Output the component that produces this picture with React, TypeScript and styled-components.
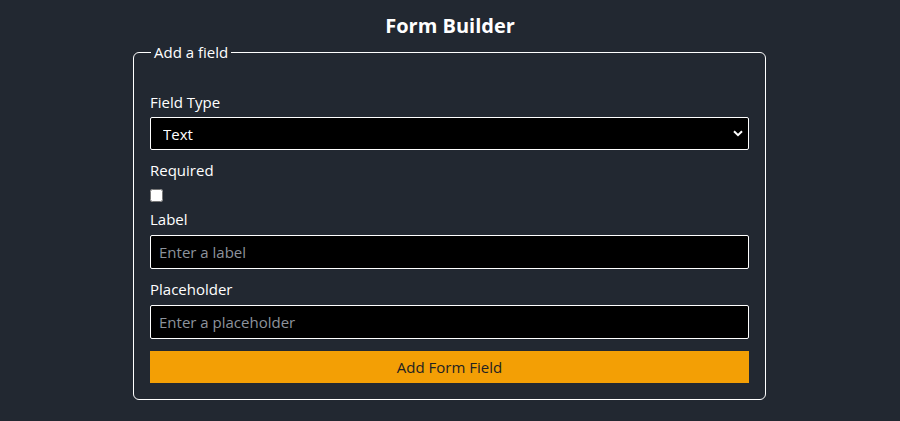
import React, { useState } from 'react';
import styled, { createGlobalStyle } from 'styled-components';

const GlobalStyle = createGlobalStyle`
  body {
    margin: 0;
    background-color: #222831;
    color: #ffffff;
    font-family: "Open Sans", "Noto Sans", sans-serif;
  }
  * {
    box-sizing: border-box;
  }
`;

const App: React.FC = () => {
  const [fieldType, setFieldType] = useState('text');
  const [required, setRequired] = useState(false);
  const [label, setLabel] = useState('');
  const [placeholder, setPlaceholder] = useState('');

  return (
    <>
      <GlobalStyle />
      <Page>
        <Title>Form Builder</Title>
        <Fieldset>
          <Legend>Add a field</Legend>
          <FieldLabel $top={29}>Field Type</FieldLabel>
          <SelectWrap>
            <Select value={fieldType} onChange={(e) => setFieldType(e.target.value)}>
              <option value="text">Text</option>
              <option value="number">Number</option>
              <option value="email">Email</option>
            </Select>
            <Chevron width="10" height="7" viewBox="0 0 10 7">
              <path d="M1 1.2 L5 5.2 L9 1.2" fill="none" stroke="#ffffff" strokeWidth="2" />
            </Chevron>
          </SelectWrap>
          <FieldLabel $top={9}>Required</FieldLabel>
          <Checkbox type="checkbox" checked={required} onChange={(e) => setRequired(e.target.checked)} />
          <FieldLabel $top={6}>Label</FieldLabel>
          <TextInput placeholder="Enter a label" value={label} onChange={(e) => setLabel(e.target.value)} />
          <FieldLabel $top={9}>Placeholder</FieldLabel>
          <TextInput
            placeholder="Enter a placeholder"
            value={placeholder}
            onChange={(e) => setPlaceholder(e.target.value)}
          />
          <AddButton type="button">Add Form Field</AddButton>
        </Fieldset>
      </Page>
    </>
  );
};

const Page = styled.div`
  display: flex;
  flex-direction: column;
  align-items: center;
  padding-top: 11px;
`;

const Title = styled.h1`
  margin: 0 0 1px;
  font-size: 20px;
  line-height: 30px;
  font-weight: 700;
  color: #ffffff;
`;

const Fieldset = styled.fieldset`
  display: flex;
  flex-direction: column;
  align-items: flex-start;
  width: 633px;
  margin: 0 0 0 -1px;
  padding: 0 16px 16px;
  border: 1px solid #ffffff;
  border-radius: 6px;
`;

const Legend = styled.legend`
  margin-left: 1px;
  padding: 0 3px;
  font-size: 15px;
  line-height: 20px;
`;

const FieldLabel = styled.label<{ $top: number }>`
  margin-top: ${(p) => p.$top}px;
  font-size: 15px;
  line-height: 22px;
`;

const SelectWrap = styled.div`
  position: relative;
  width: 100%;
  margin-top: 4px;
`;

const Select = styled.select`
  appearance: none;
  width: 100%;
  height: 33px;
  padding: 0 12px;
  background-color: #000000;
  color: #ffffff;
  border: 1px solid #ffffff;
  border-radius: 2px;
  font-family: inherit;
  font-size: 15px;
`;

const Chevron = styled.svg`
  position: absolute;
  right: 6px;
  top: 13px;
  pointer-events: none;
`;

const Checkbox = styled.input`
  width: 13px;
  height: 13px;
  margin: 8px 0 0;
`;

const TextInput = styled.input`
  width: 100%;
  height: 34px;
  margin-top: 5px;
  padding: 0 8px;
  background-color: #000000;
  color: #ffffff;
  border: 1px solid #ffffff;
  border-radius: 2px;
  font-family: inherit;
  font-size: 15px;

  &::placeholder {
    color: #8d939c;
  }
`;

const AddButton = styled.button`
  width: 100%;
  height: 32px;
  margin-top: 12px;
  background-color: #f39f05;
  color: #222222;
  border: none;
  font-family: inherit;
  font-size: 15px;
  cursor: pointer;
`;

export default App;
